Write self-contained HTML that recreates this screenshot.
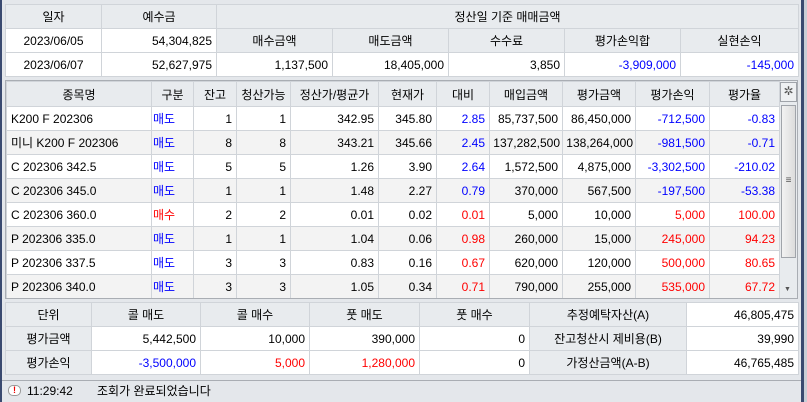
<!DOCTYPE html>
<html><head><meta charset="utf-8"><style>
*{margin:0;padding:0;box-sizing:border-box}
body{width:807px;height:402px;overflow:hidden;background:#e4e7eb;font-family:"Liberation Sans","Noto Sans CJK KR",sans-serif;font-size:12px;color:#000;position:relative}
table{border-collapse:collapse;table-layout:fixed;position:absolute}
td{border:1px solid #d0d4d9;white-space:nowrap;overflow:hidden;padding:0 4px;height:24px}
.h{background:#e8ebee;text-align:center}
.r{text-align:right;background:#fff}
.c{text-align:center}
.b{color:#0000ff}.rd{color:#ff0000}
.g td.w{background:#fff}
tr.a td{background:#f3f3f3}
.frame{position:absolute;border:1px solid #a9adb3}
</style></head><body>
<div style="position:absolute;left:0;top:0;width:2px;height:402px;background:#3a4a70"></div>
<div style="position:absolute;left:801px;top:0;width:3px;height:402px;background:#3a4a70"></div>
<div style="position:absolute;left:804px;top:0;width:3px;height:402px;background:#c9ced6"></div>

<table style="left:5px;top:4px;width:793px;border:1px solid #a9adb3">
<colgroup><col style="width:96px"><col style="width:115px"><col style="width:116px"><col style="width:116px"><col style="width:116px"><col style="width:116px"><col style="width:118px"></colgroup>
<tr><td class="h">일자</td><td class="h">예수금</td><td class="h" colspan="5">정산일 기준 매매금액</td></tr>
<tr><td class="c" style="background:#fff">2023/06/05</td><td class="r">54,304,825</td><td class="h">매수금액</td><td class="h">매도금액</td><td class="h">수수료</td><td class="h">평가손익합</td><td class="h">실현손익</td></tr>
<tr><td class="c" style="background:#fff">2023/06/07</td><td class="r">52,627,975</td><td class="r">1,137,500</td><td class="r">18,405,000</td><td class="r">3,850</td><td class="r b">-3,909,000</td><td class="r b">-145,000</td></tr>
</table>

<div style="position:absolute;left:5px;top:80px;width:793px;height:219px;border:1px solid #a9adb3;background:#fff;overflow:hidden">
<table style="left:0;top:0;width:773px">
<colgroup><col style="width:145px"><col style="width:42px"><col style="width:43px"><col style="width:54px"><col style="width:88px"><col style="width:58px"><col style="width:53px"><col style="width:73px"><col style="width:73px"><col style="width:74px"><col style="width:70px"></colgroup>
<tr style="height:25px"><td class="h">종목명</td><td class="h">구분</td><td class="h">잔고</td><td class="h">청산가능</td><td class="h">정산가/평균가</td><td class="h">현재가</td><td class="h">대비</td><td class="h">매입금액</td><td class="h">평가금액</td><td class="h">평가손익</td><td class="h">평가율</td></tr>
<tr><td>K200 F 202306</td><td class="b" style="padding-left:1px">매도</td><td class="r">1</td><td class="r">1</td><td class="r">342.95</td><td class="r">345.80</td><td class="r b">2.85</td><td class="r">85,737,500</td><td class="r">86,450,000</td><td class="r b">-712,500</td><td class="r b">-0.83</td></tr>
<tr class="a"><td>미니 K200 F 202306</td><td class="b" style="padding-left:1px">매도</td><td class="r">8</td><td class="r">8</td><td class="r">343.21</td><td class="r">345.66</td><td class="r b">2.45</td><td class="r" style="padding:0 2px">137,282,500</td><td class="r" style="padding:0 2px">138,264,000</td><td class="r b">-981,500</td><td class="r b">-0.71</td></tr>
<tr><td>C 202306 342.5</td><td class="b" style="padding-left:1px">매도</td><td class="r">5</td><td class="r">5</td><td class="r">1.26</td><td class="r">3.90</td><td class="r b">2.64</td><td class="r">1,572,500</td><td class="r">4,875,000</td><td class="r b">-3,302,500</td><td class="r b">-210.02</td></tr>
<tr class="a"><td>C 202306 345.0</td><td class="b" style="padding-left:1px">매도</td><td class="r">1</td><td class="r">1</td><td class="r">1.48</td><td class="r">2.27</td><td class="r b">0.79</td><td class="r">370,000</td><td class="r">567,500</td><td class="r b">-197,500</td><td class="r b">-53.38</td></tr>
<tr><td>C 202306 360.0</td><td class="rd" style="padding-left:1px">매수</td><td class="r">2</td><td class="r">2</td><td class="r">0.01</td><td class="r">0.02</td><td class="r rd">0.01</td><td class="r">5,000</td><td class="r">10,000</td><td class="r rd">5,000</td><td class="r rd">100.00</td></tr>
<tr class="a"><td>P 202306 335.0</td><td class="b" style="padding-left:1px">매도</td><td class="r">1</td><td class="r">1</td><td class="r">1.04</td><td class="r">0.06</td><td class="r rd">0.98</td><td class="r">260,000</td><td class="r">15,000</td><td class="r rd">245,000</td><td class="r rd">94.23</td></tr>
<tr><td>P 202306 337.5</td><td class="b" style="padding-left:1px">매도</td><td class="r">3</td><td class="r">3</td><td class="r">0.83</td><td class="r">0.16</td><td class="r rd">0.67</td><td class="r">620,000</td><td class="r">120,000</td><td class="r rd">500,000</td><td class="r rd">80.65</td></tr>
<tr class="a"><td>P 202306 340.0</td><td class="b" style="padding-left:1px">매도</td><td class="r">3</td><td class="r">3</td><td class="r">1.05</td><td class="r">0.34</td><td class="r rd">0.71</td><td class="r">790,000</td><td class="r">255,000</td><td class="r rd">535,000</td><td class="r rd">67.72</td></tr>
</table>
<div style="position:absolute;left:773px;top:0;width:19px;height:219px;background:#e8ebee;border-left:1px solid #d0d4d9"></div>
<div style="position:absolute;left:774px;top:1px;width:17px;height:20px;border:1px solid #a0a4aa;background:#eef0f2;text-align:center;font-size:12px;line-height:17px;color:#555">✲</div>
<div style="position:absolute;left:775px;top:24px;width:15px;height:153px;border:1px solid #a0a4aa;background:linear-gradient(90deg,#f2f2f2,#dcdcdc);text-align:center;line-height:150px;font-size:10px;color:#555">≡</div>
<div style="position:absolute;left:778px;top:205px;font-size:7px;color:#555">▼</div>
</div>

<table style="left:5px;top:302px;width:793px;border:1px solid #a9adb3">
<colgroup><col style="width:86px"><col style="width:109px"><col style="width:109px"><col style="width:110px"><col style="width:110px"><col style="width:157px"><col style="width:112px"></colgroup>
<tr><td class="h">단위</td><td class="h">콜 매도</td><td class="h">콜 매수</td><td class="h">풋 매도</td><td class="h">풋 매수</td><td class="h">추정예탁자산(A)</td><td class="r">46,805,475</td></tr>
<tr><td class="h">평가금액</td><td class="r">5,442,500</td><td class="r">10,000</td><td class="r">390,000</td><td class="r">0</td><td class="h">잔고청산시 제비용(B)</td><td class="r">39,990</td></tr>
<tr><td class="h">평가손익</td><td class="r b">-3,500,000</td><td class="r rd">5,000</td><td class="r rd">1,280,000</td><td class="r">0</td><td class="h">가정산금액(A-B)</td><td class="r">46,765,485</td></tr>
</table>

<div style="position:absolute;left:2px;top:380px;width:799px;height:1px;background:#a9adb3"></div>
<div style="position:absolute;left:8px;top:385px;width:13px;height:11px;border:1px solid #999;border-radius:5px;background:#fff;text-align:center;font-size:9px;line-height:9px;color:#e00;font-weight:bold">!</div>
<div style="position:absolute;left:27px;top:383px;line-height:16px">11:29:42</div>
<div style="position:absolute;left:97px;top:383px;line-height:16px">조회가 완료되었습니다</div>
</body></html>
